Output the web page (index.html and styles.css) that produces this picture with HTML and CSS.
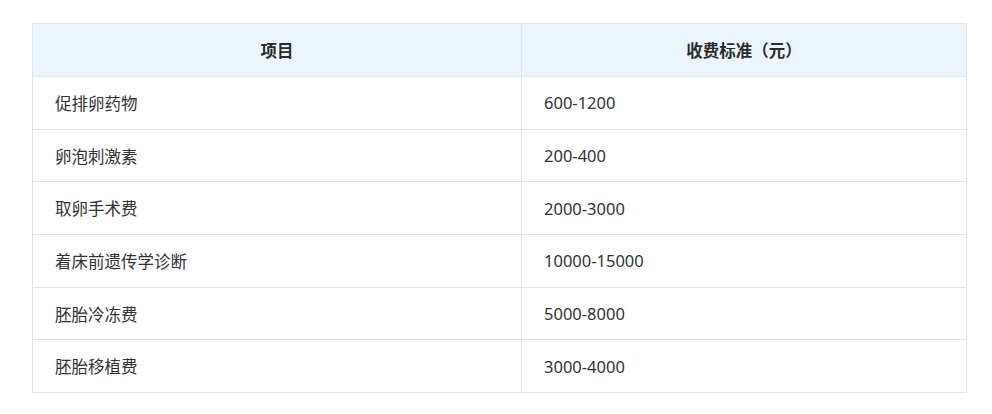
FILE: index.html
```html
<!DOCTYPE html>
<html lang="zh">
<head>
<meta charset="utf-8">
<link rel="stylesheet" href="styles.css">
</head>
<body>
<div class="wrap">
<table class="fee">
<thead>
<tr><th class="c1">项目</th><th class="c2">收费标准（元）</th></tr>
</thead>
<tbody>
<tr><td>促排卵药物</td><td>600-1200</td></tr>
<tr><td>卵泡刺激素</td><td>200-400</td></tr>
<tr><td>取卵手术费</td><td>2000-3000</td></tr>
<tr><td>着床前遗传学诊断</td><td>10000-15000</td></tr>
<tr><td>胚胎冷冻费</td><td>5000-8000</td></tr>
<tr><td>胚胎移植费</td><td>3000-4000</td></tr>
</tbody>
</table>
</div>
</body>
</html>
```
FILE: styles.css
```css
html, body {
  margin: 0;
  padding: 0;
  background: #ffffff;
}
.wrap {
  padding: 23px 25px 0 32px;
}
.fee {
  width: 935px;
  border-collapse: collapse;
  font-family: "Noto Sans", "Noto Sans CJK SC", sans-serif;
  font-size: 16.5px;
  color: #333333;
}
.fee th, .fee td {
  border: 1px solid #e3e3e3;
  height: 52.7px;
  box-sizing: border-box;
  padding: 0 22px;
  vertical-align: middle;
}
.fee th {
  height: 53px;
  background: #ebf5fe;
  font-weight: bold;
  text-align: center;
  color: #2b2b2b;
}
.fee td {
  text-align: left;
}
.fee .c1 {
  width: 489px;
}
```
